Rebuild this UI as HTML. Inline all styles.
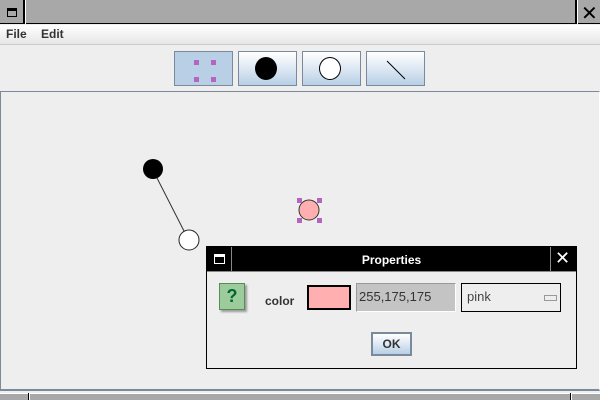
<!DOCTYPE html>
<html><head><style>
*{margin:0;padding:0;box-sizing:border-box}
body{width:600px;height:400px;overflow:hidden;background:#eeeeee;font-family:"Liberation Sans","DejaVu Sans",sans-serif;position:relative}
.a{position:absolute}
.tb{background:#a8a8a8}
.btn{position:absolute;top:51px;height:35px;width:59px;border:1px solid #7a8a9c;background:linear-gradient(#ffffff,#dde8f3 50%,#b8cfe5)}
</style></head><body>
<div class="a tb" style="left:0;top:0;width:600px;height:24px;border-bottom:1px solid #000"></div>
<div class="a" style="left:23px;top:0;width:3px;height:24px;background:#000;border-right:1px solid #fff"></div>
<div class="a" style="left:575px;top:0;width:3px;height:24px;border-left:2px solid #000;border-right:1px solid #fff"></div>
<div class="a" style="left:7px;top:8px;width:10px;height:9px;border:1px solid #000;border-top:3px solid #000"></div>
<div class="a" style="left:581px;top:1px;font-size:20px;font-weight:bold">✕</div>
<div class="a" style="left:0;top:25px;width:600px;height:20px;background:linear-gradient(#fff,#e6e6e6);border-bottom:1px solid #ccc"></div>
<div class="a" style="left:6px;top:27px;font-size:12px;font-weight:bold;color:#333">File</div>
<div class="a" style="left:41px;top:27px;font-size:12px;font-weight:bold;color:#333">Edit</div>
<div class="btn" style="left:174px;background:#b8cfe5">
<div class="a" style="left:19px;top:8px;width:5px;height:5px;background:#b565c0"></div>
<div class="a" style="left:36px;top:8px;width:5px;height:5px;background:#b565c0"></div>
<div class="a" style="left:19px;top:25px;width:5px;height:5px;background:#b565c0"></div>
<div class="a" style="left:36px;top:25px;width:5px;height:5px;background:#b565c0"></div>
</div>
<div class="btn" style="left:238px"><div class="a" style="left:16px;top:5px;width:22px;height:23px;border-radius:50%;background:#000"></div></div>
<div class="btn" style="left:302px"><div class="a" style="left:16px;top:5px;width:22px;height:23px;border-radius:50%;background:#fff;border:1px solid #000"></div></div>
<div class="btn" style="left:366px"><svg class="a" style="left:0;top:0" width="59" height="35"><line x1="20" y1="9" x2="38" y2="27" stroke="#000"/></svg></div>
<div class="a" style="left:0;top:91px;width:600px;height:300px;border:1px solid #7a8a9c;border-right-color:#fff;border-bottom:2px solid #7a8a9c"></div>
<div class="a tb" style="left:0;top:393px;width:600px;height:7px;border-top:1px solid #fff"></div>
<div class="a" style="left:28px;top:393px;width:2px;height:7px;background:#000;border-right:1px solid #fff"></div>
<div class="a" style="left:570px;top:393px;width:2px;height:7px;background:#000;border-right:1px solid #fff"></div>
<svg class="a" style="left:0;top:0" width="600" height="400">
<line x1="157" y1="178" x2="184" y2="231" stroke="#333"/>
<circle cx="153" cy="169" r="10" fill="#000"/>
<circle cx="189" cy="240" r="10" fill="#fff" stroke="#222"/>
<circle cx="309" cy="210" r="10" fill="#ffafaf" stroke="#333"/>
<rect x="297" y="198" width="5" height="5" fill="#b565c0"/>
<rect x="317" y="198" width="5" height="5" fill="#b565c0"/>
<rect x="297" y="218" width="5" height="5" fill="#b565c0"/>
<rect x="317" y="218" width="5" height="5" fill="#b565c0"/>
</svg>
<div class="a" style="left:206px;top:246px;width:371px;height:123px;border:1px solid #000;background:#eeeeee">
<div class="a" style="left:0;top:0;width:369px;height:25px;background:#000;border-bottom:1px solid #888"></div>
<div class="a" style="left:24px;top:0;width:2px;height:25px;border-left:1px solid #888"></div>
<div class="a" style="left:343px;top:0;width:2px;height:25px;border-left:1px solid #888"></div>
<div class="a" style="left:7px;top:7px;width:11px;height:10px;border:1px solid #fff;border-top:3px solid #fff"></div>
<div class="a" style="left:348px;top:1px;font-size:18px;font-weight:bold;color:#fff">✕</div>
<div class="a" style="left:0;top:6px;width:369px;text-align:center;color:#fff;font-size:12px;font-weight:bold">Properties</div>
<div class="a" style="left:12px;top:36px;width:26px;height:27px;background:#9ccc9c;border:1px solid #5a8a5a;box-shadow:2px 2px 2px #999;text-align:center;font-weight:bold;font-size:18px;color:#063;line-height:24px">?</div>
<div class="a" style="left:58px;top:47px;font-size:12px;font-weight:bold;color:#333">color</div>
<div class="a" style="left:100px;top:38px;width:44px;height:25px;background:#ffafaf;border:2px solid #000"></div>
<div class="a" style="left:149px;top:36px;width:100px;height:29px;background:#c4c4c4;border:1px solid #999;border-right-color:#fff;border-bottom-color:#fff;font-size:13px;color:#333;padding:5px 0 0 2px">255,175,175</div>
<div class="a" style="left:254px;top:36px;width:100px;height:29px;border:1px solid #000;font-size:13px;color:#444;padding:5px 0 0 5px">pink<div class="a" style="left:82px;top:11px;width:13px;height:6px;border:1px solid #999"></div></div>
<div class="a" style="left:164px;top:85px;width:41px;height:24px;border:2px solid #7a8a9c;background:linear-gradient(#fff,#dde8f3 50%,#b8cfe5);text-align:center;font-size:12px;font-weight:bold;color:#333;line-height:20px">OK</div>
</div>
</body></html>
